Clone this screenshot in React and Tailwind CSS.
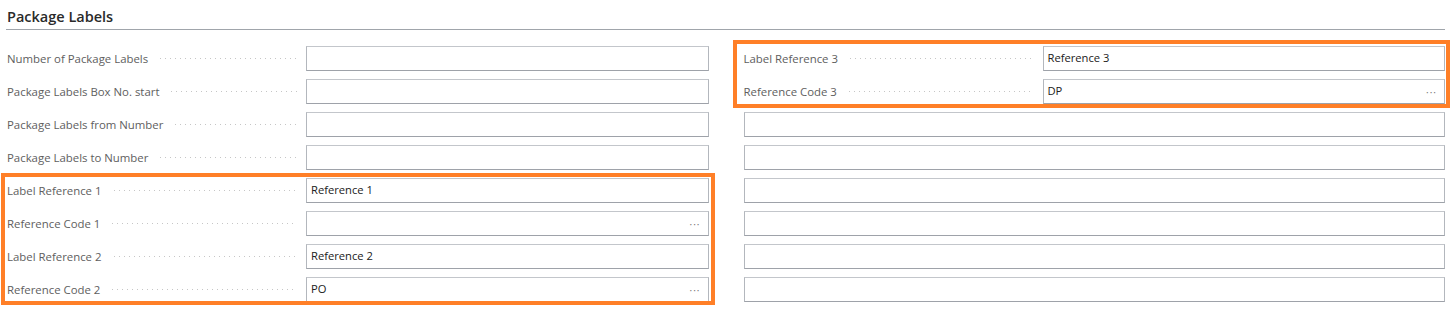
const leftRows = [
  { label: "Number of Package Labels", value: "" },
  { label: "Package Labels Box No. start", value: "" },
  { label: "Package Labels from Number", value: "" },
  { label: "Package Labels to Number", value: "" },
]

const leftMarked = [
  { label: "Label Reference 1", value: "Reference 1" },
  { label: "Reference Code 1", value: "", lookup: true },
  { label: "Label Reference 2", value: "Reference 2" },
  { label: "Reference Code 2", value: "PO", lookup: true },
]

const rightMarked = [
  { label: "Label Reference 3", value: "Reference 3" },
  { label: "Reference Code 3", value: "DP", lookup: true },
]

function Box({ value, lookup }) {
  return (
    <div className="flex-1 h-[25px] flex items-center justify-between bg-white border border-[#b3b7bd] border-t-[#c3c6cb] border-b-[#9ea2a9] pl-[4px] pr-[7px] text-[11.2px] text-[#212121]">
      <span>{value}</span>
      {lookup && <span className="text-[#777] text-[10px] tracking-[1px] leading-none">···</span>}
    </div>
  )
}

function Field({ label, value, lookup }) {
  return (
    <div className="h-[33px] flex items-center">
      <div className="w-[299px] flex items-center pr-[9px] text-[11.4px] text-[#5e5e5e]">
        <span className="whitespace-nowrap">{label}</span>
        <span className="flex-1 ml-[10px] h-[3px] bg-[radial-gradient(circle,#c6c6c6_0.8px,transparent_1px)] bg-[length:5px_3px] bg-repeat-x" />
      </div>
      <Box value={value} lookup={lookup} />
    </div>
  )
}

function EmptyField() {
  return (
    <div className="h-[33px] flex items-center">
      <Box value="" />
    </div>
  )
}

function Marked({ children, className }) {
  return (
    <div className="relative">
      {children}
      <div className={"absolute border-[4px] border-[#ff7f27] pointer-events-none " + className} />
    </div>
  )
}

export default function App() {
  return (
    <div className="bg-white w-[1453px] h-[318px] pl-[7px] pr-[8px] font-['Open_Sans',sans-serif]">
      <div className="pt-[7px] pb-[2px] border-b-[1.5px] border-[#a0a5ab] -ml-[1px] pl-[1px]">
        <h2 className="text-[14.5px] leading-[20px] font-semibold text-[#2a2a2a]">Package Labels</h2>
      </div>

      <div className="grid grid-cols-2 gap-x-[35px] pt-[12px]">
        <div>
          {leftRows.map((r) => (
            <Field key={r.label} {...r} />
          ))}
          <Marked className="-left-[6px] -right-[6px] -top-[1px] bottom-[1px]">
            {leftMarked.map((r) => (
              <Field key={r.label} {...r} />
            ))}
          </Marked>
        </div>

        <div>
          <Marked className="-left-[11px] -right-[5px] -top-[2px] bottom-0">
            {rightMarked.map((r) => (
              <Field key={r.label} {...r} />
            ))}
          </Marked>
          {[0, 1, 2, 3, 4, 5].map((i) => (
            <EmptyField key={i} />
          ))}
        </div>
      </div>
    </div>
  )
}
